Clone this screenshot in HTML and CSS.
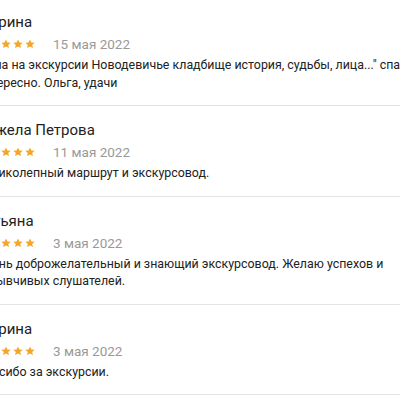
FILE: index.html
```html
<!DOCTYPE html>
<html lang="ru">
<head>
<meta charset="utf-8">
<link rel="stylesheet" href="styles.css">
</head>
<body>
<div class="reviews">
  <div class="review">
    <div class="name">Марина</div>
    <div class="meta">
      <span class="stars"><svg viewBox="0 0 10 10"><path d="M5 .4l1.4 3 3.3.3-2.5 2.2.8 3.2L5 7.4 2 9.1l.8-3.2L.3 3.7l3.3-.3z"/></svg><svg viewBox="0 0 10 10"><path d="M5 .4l1.4 3 3.3.3-2.5 2.2.8 3.2L5 7.4 2 9.1l.8-3.2L.3 3.7l3.3-.3z"/></svg><svg viewBox="0 0 10 10"><path d="M5 .4l1.4 3 3.3.3-2.5 2.2.8 3.2L5 7.4 2 9.1l.8-3.2L.3 3.7l3.3-.3z"/></svg><svg viewBox="0 0 10 10"><path d="M5 .4l1.4 3 3.3.3-2.5 2.2.8 3.2L5 7.4 2 9.1l.8-3.2L.3 3.7l3.3-.3z"/></svg><svg viewBox="0 0 10 10"><path d="M5 .4l1.4 3 3.3.3-2.5 2.2.8 3.2L5 7.4 2 9.1l.8-3.2L.3 3.7l3.3-.3z"/></svg></span>
      <span class="date">15 мая 2022</span>
    </div>
    <p class="text">Была на экскурсии Новодевичье кладбище история, судьбы, лица..." спасибо, интересно. Ольга, удачи</p>
  </div>
  <div class="review">
    <div class="name">Анжела Петрова</div>
    <div class="meta">
      <span class="stars"><svg viewBox="0 0 10 10"><path d="M5 .4l1.4 3 3.3.3-2.5 2.2.8 3.2L5 7.4 2 9.1l.8-3.2L.3 3.7l3.3-.3z"/></svg><svg viewBox="0 0 10 10"><path d="M5 .4l1.4 3 3.3.3-2.5 2.2.8 3.2L5 7.4 2 9.1l.8-3.2L.3 3.7l3.3-.3z"/></svg><svg viewBox="0 0 10 10"><path d="M5 .4l1.4 3 3.3.3-2.5 2.2.8 3.2L5 7.4 2 9.1l.8-3.2L.3 3.7l3.3-.3z"/></svg><svg viewBox="0 0 10 10"><path d="M5 .4l1.4 3 3.3.3-2.5 2.2.8 3.2L5 7.4 2 9.1l.8-3.2L.3 3.7l3.3-.3z"/></svg><svg viewBox="0 0 10 10"><path d="M5 .4l1.4 3 3.3.3-2.5 2.2.8 3.2L5 7.4 2 9.1l.8-3.2L.3 3.7l3.3-.3z"/></svg></span>
      <span class="date">11 мая 2022</span>
    </div>
    <p class="text">Великолепный маршрут и экскурсовод.</p>
  </div>
  <div class="review">
    <div class="name">Татьяна</div>
    <div class="meta">
      <span class="stars"><svg viewBox="0 0 10 10"><path d="M5 .4l1.4 3 3.3.3-2.5 2.2.8 3.2L5 7.4 2 9.1l.8-3.2L.3 3.7l3.3-.3z"/></svg><svg viewBox="0 0 10 10"><path d="M5 .4l1.4 3 3.3.3-2.5 2.2.8 3.2L5 7.4 2 9.1l.8-3.2L.3 3.7l3.3-.3z"/></svg><svg viewBox="0 0 10 10"><path d="M5 .4l1.4 3 3.3.3-2.5 2.2.8 3.2L5 7.4 2 9.1l.8-3.2L.3 3.7l3.3-.3z"/></svg><svg viewBox="0 0 10 10"><path d="M5 .4l1.4 3 3.3.3-2.5 2.2.8 3.2L5 7.4 2 9.1l.8-3.2L.3 3.7l3.3-.3z"/></svg><svg viewBox="0 0 10 10"><path d="M5 .4l1.4 3 3.3.3-2.5 2.2.8 3.2L5 7.4 2 9.1l.8-3.2L.3 3.7l3.3-.3z"/></svg></span>
      <span class="date">3 мая 2022</span>
    </div>
    <p class="text">Очень доброжелательный и знающий экскурсовод. Желаю успехов и отзывчивых слушателей.</p>
  </div>
  <div class="review">
    <div class="name">Марина</div>
    <div class="meta">
      <span class="stars"><svg viewBox="0 0 10 10"><path d="M5 .4l1.4 3 3.3.3-2.5 2.2.8 3.2L5 7.4 2 9.1l.8-3.2L.3 3.7l3.3-.3z"/></svg><svg viewBox="0 0 10 10"><path d="M5 .4l1.4 3 3.3.3-2.5 2.2.8 3.2L5 7.4 2 9.1l.8-3.2L.3 3.7l3.3-.3z"/></svg><svg viewBox="0 0 10 10"><path d="M5 .4l1.4 3 3.3.3-2.5 2.2.8 3.2L5 7.4 2 9.1l.8-3.2L.3 3.7l3.3-.3z"/></svg><svg viewBox="0 0 10 10"><path d="M5 .4l1.4 3 3.3.3-2.5 2.2.8 3.2L5 7.4 2 9.1l.8-3.2L.3 3.7l3.3-.3z"/></svg><svg viewBox="0 0 10 10"><path d="M5 .4l1.4 3 3.3.3-2.5 2.2.8 3.2L5 7.4 2 9.1l.8-3.2L.3 3.7l3.3-.3z"/></svg></span>
      <span class="date">3 мая 2022</span>
    </div>
    <p class="text">Спасибо за экскурсии.</p>
  </div>
</div>
</body>
</html>
```

FILE: styles.css
```css
html, body {
  margin: 0;
  padding: 0;
  background: #fff;
  overflow: hidden;
}
body {
  font-family: Roboto, "Noto Sans", sans-serif;
  width: 400px;
  height: 400px;
}
.reviews {
  width: 460px;
  margin: -2px 0 0 -23px;
}
.review {
  padding: 14px 0 14px;
  border-bottom: 1px solid #e3e3e3;
}
.name {
  font-size: 15px;
  line-height: 20px;
  color: #222;
}
.meta {
  display: flex;
  align-items: center;
  height: 20px;
  margin-top: 2px;
}
.stars {
  display: flex;
  gap: 2px;
}
.stars svg {
  width: 10px;
  height: 10px;
  fill: #f4a62a;
}
.date {
  margin-left: 18px;
  font-size: 13.5px;
  color: #999;
}
.text {
  margin: 2px 0 0;
  font-size: 12.4px;
  line-height: 17.5px;
  color: #222;
}
```
